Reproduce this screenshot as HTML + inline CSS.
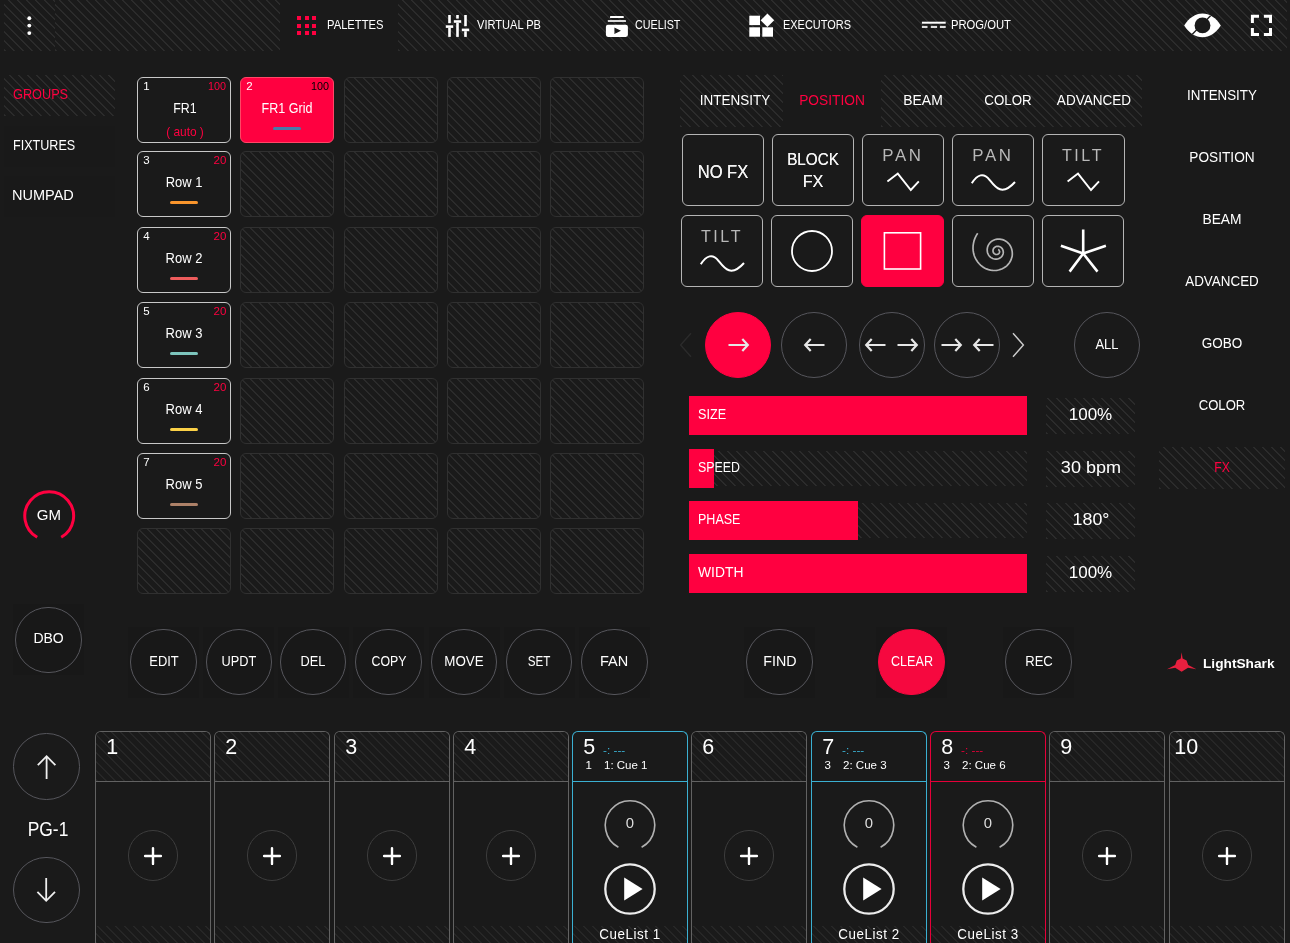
<!DOCTYPE html>
<html lang="en"><head><meta charset="utf-8"><title>LightShark</title>
<style>
html,body{margin:0;padding:0;background:#1a1a1a;}
body{width:1290px;height:943px;overflow:hidden;font-family:"Liberation Sans",sans-serif;}
#app{position:relative;width:1290px;height:943px;overflow:hidden;background:transparent;will-change:transform;}
#app div,#app span.t,#app svg{position:absolute;box-sizing:border-box;}
.t{white-space:nowrap;display:block;}
.h{background-color:#1a1a1a;background-image:repeating-linear-gradient(45deg,rgba(47,47,47,0) 0,#2f2f2f 0.8px,#2f2f2f 1.2px,rgba(47,47,47,0) 2.0px,rgba(47,47,47,0) 6.364px);}
.h2{background-color:#1a1a1a;background-image:repeating-linear-gradient(45deg,rgba(41,41,41,0) 0,#292929 0.8px,#292929 1.2px,rgba(41,41,41,0) 2.0px,rgba(41,41,41,0) 6.364px);}
.cell{border:1px solid #c8c8c8;border-radius:6px;}
.cell.e{border-color:#303030;}
.cell.sel{background:#ff0040;border-color:#ff4766;}
.bar{border-radius:2px;}
.fx{border:1px solid #b4b4b4;border-radius:6px;}
.fx.sel{background:#ff0040;border-color:#ff0040;}
.circ{border:1px solid #56565c;border-radius:50%;}
.circ.sel{background:#ff0040;border-color:#ff0040;}
.ex{border:1px solid #626262;border-bottom:none;border-radius:6px 6px 0 0;}
.exh{border-bottom:1px solid #626262;}
.plus{border:1px solid #3d3d3d;border-radius:50%;}

</style></head><body>
<div id="app">
<header id="topbar">
<div class="h" style="left:4px;top:0px;width:51px;height:51px;"></div>
<div class="h" style="left:55px;top:0px;width:225px;height:51px;"></div>
<div class="h" style="left:398px;top:0px;width:889px;height:51px;"></div>
<svg style="left:24px;top:14px" width="12" height="24" viewBox="0 0 12 24"><g fill="#fff"><circle cx="5.3" cy="4.2" r="1.95"/><circle cx="5.3" cy="11.6" r="1.95"/><circle cx="5.3" cy="19.1" r="1.95"/></g></svg>
<div style="left:296.8px;top:15.8px;width:4.2px;height:4.2px;background:#ff0040;"></div>
<div style="left:304.5px;top:15.8px;width:4.2px;height:4.2px;background:#ff0040;"></div>
<div style="left:312.2px;top:15.8px;width:4.2px;height:4.2px;background:#ff0040;"></div>
<div style="left:296.8px;top:23.5px;width:4.2px;height:4.2px;background:#ff0040;"></div>
<div style="left:304.5px;top:23.5px;width:4.2px;height:4.2px;background:#ff0040;"></div>
<div style="left:312.2px;top:23.5px;width:4.2px;height:4.2px;background:#ff0040;"></div>
<div style="left:296.8px;top:31.2px;width:4.2px;height:4.2px;background:#ff0040;"></div>
<div style="left:304.5px;top:31.2px;width:4.2px;height:4.2px;background:#ff0040;"></div>
<div style="left:312.2px;top:31.2px;width:4.2px;height:4.2px;background:#ff0040;"></div>
<span class="t" style="left:326.66px;transform-origin:0 50%;top:17px;font-size:13px;line-height:15px;color:#fff;font-weight:normal;transform:scaleX(0.8626);">PALETTES</span>
<svg style="left:445px;top:14px" width="26" height="24" viewBox="0 0 26 24"><g fill="#fff">
<rect x="3.2" y="1" width="2.6" height="8.2"/><rect x="0.8" y="11.3" width="7.4" height="2.6"/><rect x="3.2" y="13.9" width="2.6" height="9"/>
<rect x="11.2" y="1" width="2.6" height="3.6"/><rect x="8.8" y="6.2" width="7.4" height="2.6"/><rect x="11.2" y="8.8" width="2.6" height="14.1"/>
<rect x="19.2" y="1" width="2.6" height="11.2"/><rect x="16.8" y="14.6" width="7.4" height="2.6"/><rect x="19.2" y="17.2" width="2.6" height="5.7"/>
</g></svg>
<span class="t" style="left:476.87px;transform-origin:0 50%;top:17px;font-size:13px;line-height:15px;color:#fff;font-weight:normal;transform:scaleX(0.8518);">VIRTUAL PB</span>
<svg style="left:604px;top:14px" width="26" height="24" viewBox="0 0 26 24"><g fill="#fff">
<rect x="6" y="2.1" width="13.8" height="1.9" rx="0.6"/><rect x="3.8" y="6" width="18.2" height="2.1" rx="0.6" fill="#d8d8d8"/>
<path d="M4 10.7h17.8a2.1 2.1 0 0 1 2.1 2.1v8a2.1 2.1 0 0 1-2.1 2.1h-17.8a2.1 2.1 0 0 1-2.1-2.1v-8a2.1 2.1 0 0 1 2.1-2.1zM10.4 13.5v6.4l6.6-3.2z" fill-rule="evenodd"/>
</g></svg>
<span class="t" style="left:634.59px;transform-origin:0 50%;top:17px;font-size:13px;line-height:15px;color:#fff;font-weight:normal;transform:scaleX(0.8268);">CUELIST</span>
<svg style="left:748px;top:13px" width="28" height="26" viewBox="0 0 28 26"><g fill="#fff">
<rect x="1.3" y="2.7" width="10.7" height="9.4"/><rect x="1.3" y="14.3" width="10.7" height="9.4"/><rect x="14.3" y="14.3" width="10.7" height="9.4"/>
<rect x="14.6" y="2.5" width="9.6" height="9.6" transform="rotate(45 19.4 7.3)"/>
</g></svg>
<span class="t" style="left:783.48px;transform-origin:0 50%;top:17px;font-size:13px;line-height:15px;color:#fff;font-weight:normal;transform:scaleX(0.8432);">EXECUTORS</span>
<svg style="left:921px;top:20px" width="26" height="10" viewBox="0 0 26 10"><g fill="#fff">
<rect x="0.9" y="1.7" width="23.8" height="2"/><g fill="#ddd"><rect x="0.9" y="5.9" width="5.6" height="2.1"/><rect x="9.8" y="5.9" width="6.3" height="2.1"/><rect x="18.9" y="5.9" width="5.8" height="2.1"/></g>
</g></svg>
<span class="t" style="left:950.86px;transform-origin:0 50%;top:17px;font-size:13px;line-height:15px;color:#fff;font-weight:normal;transform:scaleX(0.8647);">PROG/OUT</span>
<svg style="left:1183px;top:13px" width="40" height="25" viewBox="0 0 40 25">
<path d="M1.2 12.4C6 5 12.5 0.6 19.5 0.6S33 5 37.8 12.4C33 19.8 26.5 24.2 19.5 24.2S6 19.8 1.2 12.4z" fill="#fff"/>
<circle cx="19.5" cy="12.4" r="7.9" fill="#1a1a1a"/>
<path d="M9.3 21.2L27.6 2.8" stroke="#1a1a1a" stroke-width="1.3" fill="none"/>
</svg>
<svg style="left:1250px;top:14px" width="24" height="23" viewBox="0 0 24 23"><g fill="none" stroke="#fff" stroke-width="3">
<path d="M2.4 8.9V2.3h6.6M13.9 2.3h6.6v6.6M20.5 14v6.4h-6.6M9 20.4H2.4v-6.4"/></g></svg>
</header>
<aside id="left">
<div class="h" style="left:4px;top:75px;width:111px;height:41px;"></div>
<div style="left:4px;top:126px;width:111px;height:41px;background:#191919;"></div>
<div style="left:4px;top:176px;width:111px;height:41px;background:#191919;"></div>
<span class="t" style="left:12.55px;transform-origin:0 50%;top:85px;font-size:15px;line-height:17px;color:#ff0040;font-weight:normal;transform:scaleX(0.8476);">GROUPS</span>
<span class="t" style="left:12.56px;transform-origin:0 50%;top:136px;font-size:15px;line-height:17px;color:#fff;font-weight:normal;transform:scaleX(0.8378);">FIXTURES</span>
<span class="t" style="left:12.41px;transform-origin:0 50%;top:186px;font-size:15px;line-height:17px;color:#fff;font-weight:normal;transform:scaleX(0.9676);">NUMPAD</span>
<svg style="left:20px;top:487px" width="58" height="58" viewBox="0 0 58 58">
<path d="M17.2 50.3A24.4 24.4 0 1 1 41.2 50.3" fill="none" stroke="#ff0040" stroke-width="3"/></svg>
<span class="t" style="left:49.2px;transform-origin:0 50%;top:506px;font-size:15px;line-height:17px;color:#fff;font-weight:normal;transform:scaleX(1.0034) translateX(-50%);">GM</span>
<div style="left:12.5px;top:603.5px;width:71px;height:71.5px;background:#181818;"></div>
<div class="circ" style="left:15px;top:606.5px;width:66.6px;height:66.6px;"></div>
<span class="t" style="left:48.6px;transform-origin:0 50%;top:630px;font-size:14px;line-height:16px;color:#fff;font-weight:normal;transform:scaleX(1.0000) translateX(-50%);">DBO</span>
</aside>
<main id="main">
<section id="groups">
<div class="cell" style="left:137px;top:77px;width:94px;height:66px;"></div>
<span class="t" style="left:143.14px;transform-origin:0 50%;top:80px;font-size:11.5px;line-height:12px;color:#fff;font-weight:normal;transform:scaleX(1.0000);">1</span>
<span class="t" style="left:226.35px;transform-origin:0 50%;top:80px;font-size:11.5px;line-height:12px;color:#ff0040;font-weight:normal;transform:scaleX(0.9393) translateX(-100%);">100</span>
<span class="t" style="left:184.89999999999998px;transform-origin:0 50%;top:100px;font-size:14px;line-height:16px;color:#fff;font-weight:normal;transform:scaleX(0.8846) translateX(-50%);">FR1</span>
<span class="t" style="left:185.2px;transform-origin:0 50%;top:124px;font-size:13px;line-height:15px;color:#ff0040;font-weight:normal;transform:scaleX(0.9146) translateX(-50%);">( auto )</span>
<div class="cell sel" style="left:240px;top:77px;width:94px;height:66px;"></div>
<span class="t" style="left:246.14px;transform-origin:0 50%;top:80px;font-size:11.5px;line-height:12px;color:#fff;font-weight:normal;transform:scaleX(1.0000);">2</span>
<span class="t" style="left:329.35px;transform-origin:0 50%;top:80px;font-size:11.5px;line-height:12px;color:#000;font-weight:normal;transform:scaleX(0.9393) translateX(-100%);">100</span>
<span class="t" style="left:287.2px;transform-origin:0 50%;top:100px;font-size:14px;line-height:16px;color:#fff;font-weight:normal;transform:scaleX(0.8953) translateX(-50%);">FR1 Grid</span>
<div class="bar" style="left:273px;top:126.9px;width:28.2px;height:3.3px;background:#4a7aa8;"></div>
<div class="cell e h" style="left:344px;top:77px;width:94px;height:66px;"></div>
<div class="cell e h" style="left:447px;top:77px;width:94px;height:66px;"></div>
<div class="cell e h" style="left:550px;top:77px;width:94px;height:66px;"></div>
<div class="cell" style="left:137px;top:151px;width:94px;height:66px;"></div>
<span class="t" style="left:143.14px;transform-origin:0 50%;top:154px;font-size:11.5px;line-height:12px;color:#fff;font-weight:normal;transform:scaleX(1.0000);">3</span>
<span class="t" style="left:226.39px;transform-origin:0 50%;top:154px;font-size:11.5px;line-height:12px;color:#ff0040;font-weight:normal;transform:scaleX(1.0000) translateX(-100%);">20</span>
<span class="t" style="left:184.2px;transform-origin:0 50%;top:174px;font-size:14px;line-height:16px;color:#fff;font-weight:normal;transform:scaleX(0.9238) translateX(-50%);">Row 1</span>
<div class="bar" style="left:170px;top:200.9px;width:28.2px;height:3.3px;background:#f9952c;"></div>
<div class="cell e h" style="left:240px;top:151px;width:94px;height:66px;"></div>
<div class="cell e h" style="left:344px;top:151px;width:94px;height:66px;"></div>
<div class="cell e h" style="left:447px;top:151px;width:94px;height:66px;"></div>
<div class="cell e h" style="left:550px;top:151px;width:94px;height:66px;"></div>
<div class="cell" style="left:137px;top:227px;width:94px;height:66px;"></div>
<span class="t" style="left:143.14px;transform-origin:0 50%;top:230px;font-size:11.5px;line-height:12px;color:#fff;font-weight:normal;transform:scaleX(1.0000);">4</span>
<span class="t" style="left:226.39px;transform-origin:0 50%;top:230px;font-size:11.5px;line-height:12px;color:#ff0040;font-weight:normal;transform:scaleX(1.0000) translateX(-100%);">20</span>
<span class="t" style="left:184.2px;transform-origin:0 50%;top:250px;font-size:14px;line-height:16px;color:#fff;font-weight:normal;transform:scaleX(0.9264) translateX(-50%);">Row 2</span>
<div class="bar" style="left:170px;top:276.9px;width:28.2px;height:3.3px;background:#ee5c5c;"></div>
<div class="cell e h" style="left:240px;top:227px;width:94px;height:66px;"></div>
<div class="cell e h" style="left:344px;top:227px;width:94px;height:66px;"></div>
<div class="cell e h" style="left:447px;top:227px;width:94px;height:66px;"></div>
<div class="cell e h" style="left:550px;top:227px;width:94px;height:66px;"></div>
<div class="cell" style="left:137px;top:302px;width:94px;height:66px;"></div>
<span class="t" style="left:143.14px;transform-origin:0 50%;top:305px;font-size:11.5px;line-height:12px;color:#fff;font-weight:normal;transform:scaleX(1.0000);">5</span>
<span class="t" style="left:226.39px;transform-origin:0 50%;top:305px;font-size:11.5px;line-height:12px;color:#ff0040;font-weight:normal;transform:scaleX(1.0000) translateX(-100%);">20</span>
<span class="t" style="left:184.2px;transform-origin:0 50%;top:325px;font-size:14px;line-height:16px;color:#fff;font-weight:normal;transform:scaleX(0.9264) translateX(-50%);">Row 3</span>
<div class="bar" style="left:170px;top:351.9px;width:28.2px;height:3.3px;background:#7dc5bd;"></div>
<div class="cell e h" style="left:240px;top:302px;width:94px;height:66px;"></div>
<div class="cell e h" style="left:344px;top:302px;width:94px;height:66px;"></div>
<div class="cell e h" style="left:447px;top:302px;width:94px;height:66px;"></div>
<div class="cell e h" style="left:550px;top:302px;width:94px;height:66px;"></div>
<div class="cell" style="left:137px;top:378px;width:94px;height:66px;"></div>
<span class="t" style="left:143.14px;transform-origin:0 50%;top:381px;font-size:11.5px;line-height:12px;color:#fff;font-weight:normal;transform:scaleX(1.0000);">6</span>
<span class="t" style="left:226.39px;transform-origin:0 50%;top:381px;font-size:11.5px;line-height:12px;color:#ff0040;font-weight:normal;transform:scaleX(1.0000) translateX(-100%);">20</span>
<span class="t" style="left:184.2px;transform-origin:0 50%;top:401px;font-size:14px;line-height:16px;color:#fff;font-weight:normal;transform:scaleX(0.9276) translateX(-50%);">Row 4</span>
<div class="bar" style="left:170px;top:427.9px;width:28.2px;height:3.3px;background:#fbd147;"></div>
<div class="cell e h" style="left:240px;top:378px;width:94px;height:66px;"></div>
<div class="cell e h" style="left:344px;top:378px;width:94px;height:66px;"></div>
<div class="cell e h" style="left:447px;top:378px;width:94px;height:66px;"></div>
<div class="cell e h" style="left:550px;top:378px;width:94px;height:66px;"></div>
<div class="cell" style="left:137px;top:453px;width:94px;height:66px;"></div>
<span class="t" style="left:143.14px;transform-origin:0 50%;top:456px;font-size:11.5px;line-height:12px;color:#fff;font-weight:normal;transform:scaleX(1.0000);">7</span>
<span class="t" style="left:226.39px;transform-origin:0 50%;top:456px;font-size:11.5px;line-height:12px;color:#ff0040;font-weight:normal;transform:scaleX(1.0000) translateX(-100%);">20</span>
<span class="t" style="left:184.2px;transform-origin:0 50%;top:476px;font-size:14px;line-height:16px;color:#fff;font-weight:normal;transform:scaleX(0.9264) translateX(-50%);">Row 5</span>
<div class="bar" style="left:170px;top:502.9px;width:28.2px;height:3.3px;background:#ad8168;"></div>
<div class="cell e h" style="left:240px;top:453px;width:94px;height:66px;"></div>
<div class="cell e h" style="left:344px;top:453px;width:94px;height:66px;"></div>
<div class="cell e h" style="left:447px;top:453px;width:94px;height:66px;"></div>
<div class="cell e h" style="left:550px;top:453px;width:94px;height:66px;"></div>
<div class="cell e h" style="left:137px;top:528px;width:94px;height:66px;"></div>
<div class="cell e h" style="left:240px;top:528px;width:94px;height:66px;"></div>
<div class="cell e h" style="left:344px;top:528px;width:94px;height:66px;"></div>
<div class="cell e h" style="left:447px;top:528px;width:94px;height:66px;"></div>
<div class="cell e h" style="left:550px;top:528px;width:94px;height:66px;"></div>
</section>
<section id="actions">
<div style="left:128px;top:626.6px;width:71px;height:71px;background:#181818;"></div>
<div class="circ" style="left:130.2px;top:628.8px;width:66.6px;height:66.6px;"></div>
<span class="t" style="left:163.5px;transform-origin:0 50%;top:653px;font-size:14px;line-height:16px;color:#fff;font-weight:normal;transform:scaleX(0.9219) translateX(-50%);">EDIT</span>
<div style="left:203.3px;top:626.6px;width:71px;height:71px;background:#181818;"></div>
<div class="circ" style="left:205.5px;top:628.8px;width:66.6px;height:66.6px;"></div>
<span class="t" style="left:238.8px;transform-origin:0 50%;top:653px;font-size:14px;line-height:16px;color:#fff;font-weight:normal;transform:scaleX(0.9122) translateX(-50%);">UPDT</span>
<div style="left:277.5px;top:626.6px;width:71px;height:71px;background:#181818;"></div>
<div class="circ" style="left:279.7px;top:628.8px;width:66.6px;height:66.6px;"></div>
<span class="t" style="left:313px;transform-origin:0 50%;top:653px;font-size:14px;line-height:16px;color:#fff;font-weight:normal;transform:scaleX(0.9134) translateX(-50%);">DEL</span>
<div style="left:353.2px;top:626.6px;width:71px;height:71px;background:#181818;"></div>
<div class="circ" style="left:355.4px;top:628.8px;width:66.6px;height:66.6px;"></div>
<span class="t" style="left:388.7px;transform-origin:0 50%;top:653px;font-size:14px;line-height:16px;color:#fff;font-weight:normal;transform:scaleX(0.8825) translateX(-50%);">COPY</span>
<div style="left:428.7px;top:626.6px;width:71px;height:71px;background:#181818;"></div>
<div class="circ" style="left:430.9px;top:628.8px;width:66.6px;height:66.6px;"></div>
<span class="t" style="left:464.2px;transform-origin:0 50%;top:653px;font-size:14px;line-height:16px;color:#fff;font-weight:normal;transform:scaleX(0.9530) translateX(-50%);">MOVE</span>
<div style="left:503.5px;top:626.6px;width:71px;height:71px;background:#181818;"></div>
<div class="circ" style="left:505.7px;top:628.8px;width:66.6px;height:66.6px;"></div>
<span class="t" style="left:539px;transform-origin:0 50%;top:653px;font-size:14px;line-height:16px;color:#fff;font-weight:normal;transform:scaleX(0.8321) translateX(-50%);">SET</span>
<div style="left:578.9px;top:626.6px;width:71px;height:71px;background:#181818;"></div>
<div class="circ" style="left:581.1px;top:628.8px;width:66.6px;height:66.6px;"></div>
<span class="t" style="left:614.4px;transform-origin:0 50%;top:653px;font-size:14px;line-height:16px;color:#fff;font-weight:normal;transform:scaleX(1.0359) translateX(-50%);">FAN</span>
<div style="left:743.9px;top:626.6px;width:71px;height:71px;background:#181818;"></div>
<div class="circ" style="left:746.1px;top:628.8px;width:66.6px;height:66.6px;"></div>
<span class="t" style="left:780.1px;transform-origin:0 50%;top:653px;font-size:14px;line-height:16px;color:#fff;font-weight:normal;transform:scaleX(1.0192) translateX(-50%);">FIND</span>
<div style="left:876px;top:626.6px;width:71px;height:71px;background:#181818;"></div>
<div class="circ sel" style="left:878.2px;top:628.8px;width:66.6px;height:66.6px;background:#f6083f;border-color:#f6083f;"></div>
<span class="t" style="left:912.2px;transform-origin:0 50%;top:653px;font-size:14px;line-height:16px;color:#fff;font-weight:normal;transform:scaleX(0.8994) translateX(-50%);">CLEAR</span>
<div style="left:1002.9px;top:626.6px;width:71px;height:71px;background:#181818;"></div>
<div class="circ" style="left:1005.1px;top:628.8px;width:66.6px;height:66.6px;"></div>
<span class="t" style="left:1039.1000000000001px;transform-origin:0 50%;top:653px;font-size:14px;line-height:16px;color:#fff;font-weight:normal;transform:scaleX(0.9328) translateX(-50%);">REC</span>
</section>
<section id="fx">
<div class="h" style="left:680px;top:75px;width:103px;height:52px;"></div>
<div class="h" style="left:881px;top:75px;width:261px;height:52px;"></div>
<span class="t" style="left:734.5px;transform-origin:0 50%;top:91px;font-size:15px;line-height:17px;color:#fff;font-weight:normal;transform:scaleX(0.8986) translateX(-50%);">INTENSITY</span>
<span class="t" style="left:832px;transform-origin:0 50%;top:91px;font-size:15px;line-height:17px;color:#ff0040;font-weight:normal;transform:scaleX(0.9162) translateX(-50%);">POSITION</span>
<span class="t" style="left:923px;transform-origin:0 50%;top:91px;font-size:15px;line-height:17px;color:#fff;font-weight:normal;transform:scaleX(0.9290) translateX(-50%);">BEAM</span>
<span class="t" style="left:1008.4px;transform-origin:0 50%;top:91px;font-size:15px;line-height:17px;color:#fff;font-weight:normal;transform:scaleX(0.8868) translateX(-50%);">COLOR</span>
<span class="t" style="left:1094px;transform-origin:0 50%;top:91px;font-size:15px;line-height:17px;color:#fff;font-weight:normal;transform:scaleX(0.9036) translateX(-50%);">ADVANCED</span>
<div class="fx" style="left:681.8px;top:134px;width:82.3px;height:71.8px;"></div>
<div class="fx" style="left:771.8px;top:134px;width:82.3px;height:71.8px;"></div>
<div class="fx" style="left:862px;top:134px;width:82.3px;height:71.8px;"></div>
<div class="fx" style="left:952px;top:134px;width:82.3px;height:71.8px;"></div>
<div class="fx" style="left:1042.3px;top:134px;width:82.3px;height:71.8px;"></div>
<div class="fx" style="left:681.2px;top:215px;width:82.3px;height:71.6px;"></div>
<div class="fx" style="left:771.2px;top:215px;width:82.3px;height:71.6px;"></div>
<div class="fx sel" style="left:861.3px;top:215px;width:82.3px;height:71.6px;"></div>
<div class="fx" style="left:951.6px;top:215px;width:82.3px;height:71.6px;"></div>
<div class="fx" style="left:1042px;top:215px;width:82.3px;height:71.6px;"></div>
<span class="t" style="left:723.4px;transform-origin:0 50%;top:162px;font-size:17.5px;line-height:20px;color:#f4f4f4;font-weight:normal;transform:scaleX(0.9434) translateX(-50%);text-shadow:0 0 0.4px #fff;">NO FX</span>
<span class="t" style="left:813px;transform-origin:0 50%;top:150px;font-size:17px;line-height:19px;color:#f4f4f4;font-weight:normal;transform:scaleX(0.8966) translateX(-50%);text-shadow:0 0 0.4px #fff;">BLOCK</span>
<span class="t" style="left:813px;transform-origin:0 50%;top:172px;font-size:17px;line-height:19px;color:#f4f4f4;font-weight:normal;transform:scaleX(0.9544) translateX(-50%);text-shadow:0 0 0.4px #fff;">FX</span>
<span class="t" style="left:902.5px;transform-origin:0 50%;top:146px;font-size:16.5px;line-height:18px;color:#b8b8b8;font-weight:normal;letter-spacing:2.6px;transform:scaleX(1.0205) translateX(-50%);">PAN</span>
<span class="t" style="left:992.5px;transform-origin:0 50%;top:146px;font-size:16.5px;line-height:18px;color:#b8b8b8;font-weight:normal;letter-spacing:2.6px;transform:scaleX(1.0205) translateX(-50%);">PAN</span>
<span class="t" style="left:1083px;transform-origin:0 50%;top:146px;font-size:16.5px;line-height:18px;color:#b8b8b8;font-weight:normal;letter-spacing:2.6px;transform:scaleX(0.9752) translateX(-50%);">TILT</span>
<span class="t" style="left:721.5px;transform-origin:0 50%;top:227px;font-size:16.5px;line-height:18px;color:#b8b8b8;font-weight:normal;letter-spacing:2.6px;transform:scaleX(0.9752) translateX(-50%);">TILT</span>
<svg style="left:882px;top:168px" width="44" height="28" viewBox="0 0 44 28"><path d="M5.4 13.6L15.8 5.6L28.8 22L36.8 13.4" stroke="#fff" fill="none" stroke-width="1.9"/></svg>
<svg style="left:1062px;top:168px" width="44" height="28" viewBox="0 0 44 28"><path d="M5.6 13.6L16 5.6L29 22L37 13.4" stroke="#fff" fill="none" stroke-width="1.9"/></svg>
<svg style="left:968px;top:166px" width="52" height="32" viewBox="0 0 52 32"><path d="M3.8 17.2C9.5 8.5 15.5 6.2 21.5 13.8S34 30.5 47 16" stroke="#fff" fill="none" stroke-width="2"/></svg>
<svg style="left:697px;top:247px" width="52" height="32" viewBox="0 0 52 32"><path d="M3.8 17.2C9.5 8.5 15.5 6.2 21.5 13.8S34 30.5 47 16" stroke="#fff" fill="none" stroke-width="2"/></svg>
<svg style="left:787px;top:226px" width="50" height="50" viewBox="0 0 50 50"><circle cx="25" cy="25" r="20" stroke="#fff" fill="none" stroke-width="1.8"/></svg>
<svg style="left:877px;top:226px" width="50" height="50" viewBox="0 0 50 50"><rect x="7.4" y="6.8" width="36.2" height="36.2" stroke="#fff" fill="none" stroke-width="1.6"/></svg>
<svg style="left:965px;top:226px" width="56" height="52" viewBox="0 0 56 52"><path d="M12.7 7.3L11.2 9.6L10.0 12.1L9.1 14.6L8.5 17.2L8.1 19.8L8.0 22.4L8.2 24.9L8.6 27.3L9.3 29.7L10.2 32.0L11.4 34.1L12.7 36.0L14.2 37.8L15.8 39.4L17.6 40.7L19.5 41.9L21.4 42.9L23.5 43.6L25.5 44.1L27.6 44.4L29.6 44.5L31.7 44.3L33.6 44.0L35.5 43.4L37.3 42.7L39.0 41.8L40.6 40.8L42.0 39.6L43.3 38.2L44.4 36.8L45.3 35.3L46.1 33.7L46.6 32.1L47.1 30.5L47.3 28.8L47.3 27.2L47.2 25.6L46.9 24.0L46.5 22.5L45.9 21.0L45.2 19.7L44.4 18.4L43.4 17.3L42.4 16.3L41.2 15.4L40.0 14.7L38.8 14.1L37.5 13.6L36.1 13.3L34.8 13.1L33.5 13.0L32.2 13.1L31.0 13.3L29.7 13.7L28.6 14.2L27.5 14.7L26.5 15.4L25.6 16.2L24.8 17.0L24.1 17.9L23.5 18.9L23.0 19.9L22.6 20.9L22.4 22.0L22.2 23.0L22.2 24.1L22.3 25.1L22.4 26.1L22.7 27.1L23.1 28.0L23.5 28.9L24.1 29.7L24.7 30.4L25.4 31.1L26.1 31.6L26.9 32.1L27.7 32.5L28.5 32.8L29.3 33.0L30.2 33.1L31.0 33.2L31.9 33.1L32.7 33.0L33.4 32.7L34.2 32.4L34.9 32.1L35.5 31.6L36.1 31.1L36.6 30.6L37.1 30.0L37.4 29.4L37.8 28.8L38.0 28.1L38.2 27.4L38.3 26.7L38.3 26.1L38.2 25.4L38.1 24.8L37.9 24.1L37.7 23.6L37.4 23.0L37.1 22.5L36.7 22.0L36.2 21.6L35.8 21.3L35.3 20.9L34.8 20.7L34.2 20.5L33.7 20.4L33.2 20.3L32.6 20.3L32.1 20.3L31.6 20.4L31.1 20.5L30.6 20.7L30.2 21.0L29.8 21.2L29.4 21.6L29.1 21.9L28.8 22.3L28.5 22.7L28.3 23.1L28.2 23.5L28.1 23.9L28.0 24.4L28.0 24.8L28.0 25.2L28.1 25.6L28.2 26.0L28.3 26.4L28.5 26.8L28.8 27.1L29.0 27.4L29.3 27.7L29.6 27.9L29.9 28.1L30.2 28.2L30.6 28.4L30.9 28.5L31.3 28.5L31.6 28.5L31.9 28.5L32.3 28.4L32.6 28.3L32.9 28.2L33.2 28.1L33.4 27.9L33.7 27.7L33.9 27.5L34.1 27.2L34.2 27.0L34.4 26.7L34.5 26.4L34.5 26.2L34.6 25.9L34.6 25.6L34.6 25.3L34.5 25.1L34.4 24.8L34.3 24.6L34.2 24.4L34.1 24.2L33.9 24.0L33.7 23.8L33.5 23.6L33.3 23.5L33.1 23.4" stroke="#b4b4b4" stroke-width="1.7" fill="none"/></svg>
<svg style="left:1056px;top:226px" width="56" height="52" viewBox="0 0 56 52"><path d="M27.2 27.5L27.2 3.5M27.2 27.5L49.9 19.8M27.2 27.5L41.5 45.6M27.2 27.5L13.6 45.6M27.2 27.5L4.9 19.8" stroke="#fff" fill="none" stroke-width="2.6"/></svg>
<div class="circ sel" style="left:704.8px;top:311.5px;width:66.6px;height:66.6px;"></div>
<div class="circ" style="left:780.7px;top:311.5px;width:66.6px;height:66.6px;"></div>
<div class="circ" style="left:858.7px;top:311.5px;width:66.6px;height:66.6px;"></div>
<div class="circ" style="left:933.6px;top:311.5px;width:66.6px;height:66.6px;"></div>
<div class="circ" style="left:1073.7px;top:311.5px;width:66.6px;height:66.6px;"></div>
<span class="t" style="left:1107px;transform-origin:0 50%;top:336px;font-size:14px;line-height:16px;color:#fff;font-weight:normal;transform:scaleX(0.9239) translateX(-50%);">ALL</span>
<svg style="left:722.7px;top:335px" width="32" height="20" viewBox="722.7 335 32 20"><path d="M728.2 345H747.0M742.00 339.1L747.50 345L742.00 350.9" stroke="#e6e6e6" stroke-width="2.2" fill="none"/></svg>
<svg style="left:798.4px;top:335px" width="32" height="20" viewBox="798.4 335 32 20"><path d="M824.9 345H806.1M811.10 339.1L805.60 345L811.10 350.9" stroke="#e6e6e6" stroke-width="2.2" fill="none"/></svg>
<svg style="left:859.4px;top:335px" width="32" height="20" viewBox="859.4 335 32 20"><path d="M885.9 345H867.1M872.10 339.1L866.60 345L872.10 350.9" stroke="#e6e6e6" stroke-width="2.2" fill="none"/></svg>
<svg style="left:892.3px;top:335px" width="32" height="20" viewBox="892.3 335 32 20"><path d="M897.8 345H916.5999999999999M911.60 339.1L917.10 345L911.60 350.9" stroke="#e6e6e6" stroke-width="2.2" fill="none"/></svg>
<svg style="left:935.7px;top:335px" width="32" height="20" viewBox="935.7 335 32 20"><path d="M941.2 345H960.0M955.00 339.1L960.50 345L955.00 350.9" stroke="#e6e6e6" stroke-width="2.2" fill="none"/></svg>
<svg style="left:967.3px;top:335px" width="32" height="20" viewBox="967.3 335 32 20"><path d="M993.8 345H975.0M980.00 339.1L974.50 345L980.00 350.9" stroke="#e6e6e6" stroke-width="2.2" fill="none"/></svg>
<svg style="left:1008px;top:330px" width="20" height="30" viewBox="0 0 20 30"><path d="M5 3.2L15.4 15L5 26.8" stroke="#ccc" stroke-width="1.4" fill="none"/></svg>
<svg style="left:676px;top:330px" width="20" height="30" viewBox="0 0 20 30"><path d="M15 3.2L4.6 15L15 26.8" stroke="#2b2b2b" stroke-width="1.4" fill="none"/></svg>
<div class="h" style="left:689px;top:398px;width:338.2px;height:35px;"></div>
<div style="left:689px;top:396px;width:338.2px;height:39px;background:#ff0040;"></div>
<span class="t" style="left:697.65px;transform-origin:0 50%;top:406px;font-size:14px;line-height:16px;color:#fff;font-weight:normal;transform:scaleX(0.9032);">SIZE</span>
<div class="h" style="left:1046px;top:398px;width:89px;height:35.5px;"></div>
<span class="t" style="left:1090.5px;transform-origin:0 50%;top:405px;font-size:17px;line-height:19px;color:#fff;font-weight:normal;transform:scaleX(1.0000) translateX(-50%);">100%</span>
<div class="h" style="left:689px;top:451px;width:338.2px;height:35px;"></div>
<div style="left:689px;top:449px;width:25.3px;height:39px;background:#ff0040;"></div>
<span class="t" style="left:697.67px;transform-origin:0 50%;top:459px;font-size:14px;line-height:16px;color:#fff;font-weight:normal;transform:scaleX(0.8851);">SPEED</span>
<div class="h" style="left:1046px;top:451px;width:89px;height:35.5px;"></div>
<span class="t" style="left:1090.5px;transform-origin:0 50%;top:458px;font-size:17px;line-height:19px;color:#fff;font-weight:normal;transform:scaleX(1.0628) translateX(-50%);">30 bpm</span>
<div class="h" style="left:689px;top:503px;width:338.2px;height:35px;"></div>
<div style="left:689px;top:501px;width:169px;height:39px;background:#ff0040;"></div>
<span class="t" style="left:697.66px;transform-origin:0 50%;top:511px;font-size:14px;line-height:16px;color:#fff;font-weight:normal;transform:scaleX(0.8936);">PHASE</span>
<div class="h" style="left:1046px;top:503px;width:89px;height:35.5px;"></div>
<span class="t" style="left:1090.5px;transform-origin:0 50%;top:510px;font-size:17px;line-height:19px;color:#fff;font-weight:normal;transform:scaleX(1.0496) translateX(-50%);">180°</span>
<div class="h" style="left:689px;top:556px;width:338.2px;height:35px;"></div>
<div style="left:689px;top:554px;width:338.2px;height:39px;background:#ff0040;"></div>
<span class="t" style="left:697.56px;transform-origin:0 50%;top:564px;font-size:14px;line-height:16px;color:#fff;font-weight:normal;transform:scaleX(0.9891);">WIDTH</span>
<div class="h" style="left:1046px;top:556px;width:89px;height:35.5px;"></div>
<span class="t" style="left:1090.5px;transform-origin:0 50%;top:563px;font-size:17px;line-height:19px;color:#fff;font-weight:normal;transform:scaleX(1.0000) translateX(-50%);">100%</span>
</section>
</main>
<aside id="right">
<div class="h" style="left:1159px;top:447px;width:126px;height:42px;"></div>
<span class="t" style="left:1222px;transform-origin:0 50%;top:87px;font-size:14.5px;line-height:16px;color:#fff;font-weight:normal;transform:scaleX(0.9211) translateX(-50%);">INTENSITY</span>
<span class="t" style="left:1222px;transform-origin:0 50%;top:149px;font-size:14.5px;line-height:16px;color:#fff;font-weight:normal;transform:scaleX(0.9420) translateX(-50%);">POSITION</span>
<span class="t" style="left:1222px;transform-origin:0 50%;top:211px;font-size:14.5px;line-height:16px;color:#fff;font-weight:normal;transform:scaleX(0.9512) translateX(-50%);">BEAM</span>
<span class="t" style="left:1222px;transform-origin:0 50%;top:273px;font-size:14.5px;line-height:16px;color:#fff;font-weight:normal;transform:scaleX(0.9250) translateX(-50%);">ADVANCED</span>
<span class="t" style="left:1222px;transform-origin:0 50%;top:335px;font-size:14.5px;line-height:16px;color:#fff;font-weight:normal;transform:scaleX(0.9318) translateX(-50%);">GOBO</span>
<span class="t" style="left:1222px;transform-origin:0 50%;top:397px;font-size:14.5px;line-height:16px;color:#fff;font-weight:normal;transform:scaleX(0.9038) translateX(-50%);">COLOR</span>
<span class="t" style="left:1222px;transform-origin:0 50%;top:459px;font-size:14.5px;line-height:16px;color:#ff0040;font-weight:normal;transform:scaleX(0.8421) translateX(-50%);">FX</span>
<svg style="left:1166px;top:651px" width="32" height="22" viewBox="0 0 32 22">
<path d="M15.6 1.2L16.6 7.4L20.6 9.4L22.2 14L30.4 18.2L22 16.8L15.6 20.8L9.2 16.8L1 18.2L9.2 14L10.8 9.4L14.8 7.4z" fill="#e8203f"/></svg>
<span class="t" style="left:1202.67px;transform-origin:0 50%;top:656px;font-size:13.4px;line-height:15px;color:#fff;font-weight:bold;transform:scaleX(1.0229);">LightShark</span>
</aside>
<footer id="executors">
<div class="circ" style="left:13.2px;top:733.2px;width:66.4px;height:66.4px;"></div>
<div class="circ" style="left:13.2px;top:857px;width:66.4px;height:66.4px;"></div>
<svg style="left:33px;top:752px" width="28" height="30" viewBox="0 0 28 30"><path d="M13.6 27V4.6M4.8 13.2L13.6 4.2L22.4 13.2" stroke="#eee" stroke-width="1.8" fill="none"/></svg>
<svg style="left:33px;top:875px" width="28" height="30" viewBox="0 0 28 30"><path d="M13.2 3V25.4M4.4 16.8L13.2 25.8L22 16.8" stroke="#eee" stroke-width="1.8" fill="none"/></svg>
<span class="t" style="left:48px;transform-origin:0 50%;top:818px;font-size:20px;line-height:22px;color:#fff;font-weight:normal;transform:scaleX(0.8712) translateX(-50%);">PG-1</span>
<div class="ex" style="left:95px;top:731px;width:116px;height:215px;border-color:#626262;"></div>
<div class="exh h2" style="left:96px;top:732px;width:114px;height:50px;border-color:#626262;border-radius:5px 5px 0 0;"></div>
<div class="h2" style="left:96px;top:925.6px;width:114px;height:18px;"></div>
<span class="t" style="left:112.2px;transform-origin:0 50%;top:735px;font-size:21.5px;line-height:24px;color:#fff;font-weight:normal;transform:scaleX(1.0000) translateX(-50%);">1</span>
<div class="plus" style="left:127.6px;top:830.2px;width:50.4px;height:50.4px;"></div>
<svg style="left:140.8px;top:843.5px" width="24" height="24" viewBox="0 0 24 24"><path d="M4.1 12H19.9M12 4.1V19.9" stroke="#fff" stroke-width="2.4" stroke-linecap="round" fill="none"/></svg>
<div class="ex" style="left:214px;top:731px;width:116px;height:215px;border-color:#626262;"></div>
<div class="exh h2" style="left:215px;top:732px;width:114px;height:50px;border-color:#626262;border-radius:5px 5px 0 0;"></div>
<div class="h2" style="left:215px;top:925.6px;width:114px;height:18px;"></div>
<span class="t" style="left:231.2px;transform-origin:0 50%;top:735px;font-size:21.5px;line-height:24px;color:#fff;font-weight:normal;transform:scaleX(1.0000) translateX(-50%);">2</span>
<div class="plus" style="left:246.6px;top:830.2px;width:50.4px;height:50.4px;"></div>
<svg style="left:259.8px;top:843.5px" width="24" height="24" viewBox="0 0 24 24"><path d="M4.1 12H19.9M12 4.1V19.9" stroke="#fff" stroke-width="2.4" stroke-linecap="round" fill="none"/></svg>
<div class="ex" style="left:334px;top:731px;width:116px;height:215px;border-color:#626262;"></div>
<div class="exh h2" style="left:335px;top:732px;width:114px;height:50px;border-color:#626262;border-radius:5px 5px 0 0;"></div>
<div class="h2" style="left:335px;top:925.6px;width:114px;height:18px;"></div>
<span class="t" style="left:351.2px;transform-origin:0 50%;top:735px;font-size:21.5px;line-height:24px;color:#fff;font-weight:normal;transform:scaleX(1.0000) translateX(-50%);">3</span>
<div class="plus" style="left:366.6px;top:830.2px;width:50.4px;height:50.4px;"></div>
<svg style="left:379.8px;top:843.5px" width="24" height="24" viewBox="0 0 24 24"><path d="M4.1 12H19.9M12 4.1V19.9" stroke="#fff" stroke-width="2.4" stroke-linecap="round" fill="none"/></svg>
<div class="ex" style="left:453px;top:731px;width:116px;height:215px;border-color:#626262;"></div>
<div class="exh h2" style="left:454px;top:732px;width:114px;height:50px;border-color:#626262;border-radius:5px 5px 0 0;"></div>
<div class="h2" style="left:454px;top:925.6px;width:114px;height:18px;"></div>
<span class="t" style="left:470.2px;transform-origin:0 50%;top:735px;font-size:21.5px;line-height:24px;color:#fff;font-weight:normal;transform:scaleX(1.0000) translateX(-50%);">4</span>
<div class="plus" style="left:485.6px;top:830.2px;width:50.4px;height:50.4px;"></div>
<svg style="left:498.8px;top:843.5px" width="24" height="24" viewBox="0 0 24 24"><path d="M4.1 12H19.9M12 4.1V19.9" stroke="#fff" stroke-width="2.4" stroke-linecap="round" fill="none"/></svg>
<div class="ex" style="left:572px;top:731px;width:116px;height:215px;border-color:#3bb0d2;"></div>
<div class="exh" style="left:573px;top:732px;width:114px;height:50px;border-color:#3bb0d2;border-radius:5px 5px 0 0;"></div>
<div class="h2" style="left:573px;top:925.6px;width:114px;height:18px;"></div>
<span class="t" style="left:589.2px;transform-origin:0 50%;top:735px;font-size:21.5px;line-height:24px;color:#fff;font-weight:normal;transform:scaleX(1.0000) translateX(-50%);">5</span>
<span class="t" style="left:602.52px;transform-origin:0 50%;top:744px;font-size:11px;line-height:12px;color:#3bb0d2;font-weight:normal;transform:scaleX(1.0714);">-: ---</span>
<span class="t" style="left:585.54px;transform-origin:0 50%;top:759px;font-size:11.5px;line-height:12px;color:#fff;font-weight:normal;transform:scaleX(1.0000);">1</span>
<span class="t" style="left:603.94px;transform-origin:0 50%;top:759px;font-size:11.5px;line-height:12px;color:#fff;font-weight:normal;transform:scaleX(1.0005);">1: Cue 1</span>
<svg style="left:600.8px;top:795.6px" width="58" height="58" viewBox="0 0 58 58"><path d="M17.4 51.2A24.7 24.7 0 1 1 40.6 51.2" fill="none" stroke="#b0b0b0" stroke-width="1.6"/></svg>
<span class="t" style="left:629.8px;transform-origin:0 50%;top:815px;font-size:14px;line-height:16px;color:#ddd;font-weight:normal;transform:scaleX(1.0625) translateX(-50%);">0</span>
<svg style="left:600.8px;top:859.7px" width="58" height="58" viewBox="0 0 58 58"><circle cx="29" cy="29" r="24.7" fill="none" stroke="#ececec" stroke-width="2.3"/><path d="M23.2 17.4L41.6 29L23.2 40.6z" fill="#fff"/></svg>
<span class="t" style="left:629.8px;transform-origin:0 50%;top:925px;font-size:15px;line-height:17px;color:#fff;font-weight:normal;letter-spacing:0.6px;transform:scaleX(0.8913) translateX(-50%);">CueList 1</span>
<div class="ex" style="left:691px;top:731px;width:116px;height:215px;border-color:#626262;"></div>
<div class="exh h2" style="left:692px;top:732px;width:114px;height:50px;border-color:#626262;border-radius:5px 5px 0 0;"></div>
<div class="h2" style="left:692px;top:925.6px;width:114px;height:18px;"></div>
<span class="t" style="left:708.2px;transform-origin:0 50%;top:735px;font-size:21.5px;line-height:24px;color:#fff;font-weight:normal;transform:scaleX(1.0000) translateX(-50%);">6</span>
<div class="plus" style="left:723.6px;top:830.2px;width:50.4px;height:50.4px;"></div>
<svg style="left:736.8px;top:843.5px" width="24" height="24" viewBox="0 0 24 24"><path d="M4.1 12H19.9M12 4.1V19.9" stroke="#fff" stroke-width="2.4" stroke-linecap="round" fill="none"/></svg>
<div class="ex" style="left:811px;top:731px;width:116px;height:215px;border-color:#3bb0d2;"></div>
<div class="exh" style="left:812px;top:732px;width:114px;height:50px;border-color:#3bb0d2;border-radius:5px 5px 0 0;"></div>
<div class="h2" style="left:812px;top:925.6px;width:114px;height:18px;"></div>
<span class="t" style="left:828.2px;transform-origin:0 50%;top:735px;font-size:21.5px;line-height:24px;color:#fff;font-weight:normal;transform:scaleX(1.0000) translateX(-50%);">7</span>
<span class="t" style="left:841.52px;transform-origin:0 50%;top:744px;font-size:11px;line-height:12px;color:#3bb0d2;font-weight:normal;transform:scaleX(1.0714);">-: ---</span>
<span class="t" style="left:824.54px;transform-origin:0 50%;top:759px;font-size:11.5px;line-height:12px;color:#fff;font-weight:normal;transform:scaleX(1.0000);">3</span>
<span class="t" style="left:842.93px;transform-origin:0 50%;top:759px;font-size:11.5px;line-height:12px;color:#fff;font-weight:normal;transform:scaleX(1.0038);">2: Cue 3</span>
<svg style="left:839.8px;top:795.6px" width="58" height="58" viewBox="0 0 58 58"><path d="M17.4 51.2A24.7 24.7 0 1 1 40.6 51.2" fill="none" stroke="#b0b0b0" stroke-width="1.6"/></svg>
<span class="t" style="left:868.8px;transform-origin:0 50%;top:815px;font-size:14px;line-height:16px;color:#ddd;font-weight:normal;transform:scaleX(1.0625) translateX(-50%);">0</span>
<svg style="left:839.8px;top:859.7px" width="58" height="58" viewBox="0 0 58 58"><circle cx="29" cy="29" r="24.7" fill="none" stroke="#ececec" stroke-width="2.3"/><path d="M23.2 17.4L41.6 29L23.2 40.6z" fill="#fff"/></svg>
<span class="t" style="left:868.8px;transform-origin:0 50%;top:925px;font-size:15px;line-height:17px;color:#fff;font-weight:normal;letter-spacing:0.6px;transform:scaleX(0.8913) translateX(-50%);">CueList 2</span>
<div class="ex" style="left:930px;top:731px;width:116px;height:215px;border-color:#e60039;"></div>
<div class="exh" style="left:931px;top:732px;width:114px;height:50px;border-color:#e60039;border-radius:5px 5px 0 0;"></div>
<div class="h2" style="left:931px;top:925.6px;width:114px;height:18px;"></div>
<span class="t" style="left:947.2px;transform-origin:0 50%;top:735px;font-size:21.5px;line-height:24px;color:#fff;font-weight:normal;transform:scaleX(1.0000) translateX(-50%);">8</span>
<span class="t" style="left:960.52px;transform-origin:0 50%;top:744px;font-size:11px;line-height:12px;color:#e60039;font-weight:normal;transform:scaleX(1.0714);">-: ---</span>
<span class="t" style="left:943.54px;transform-origin:0 50%;top:759px;font-size:11.5px;line-height:12px;color:#fff;font-weight:normal;transform:scaleX(1.0000);">3</span>
<span class="t" style="left:961.93px;transform-origin:0 50%;top:759px;font-size:11.5px;line-height:12px;color:#fff;font-weight:normal;transform:scaleX(1.0038);">2: Cue 6</span>
<svg style="left:958.8px;top:795.6px" width="58" height="58" viewBox="0 0 58 58"><path d="M17.4 51.2A24.7 24.7 0 1 1 40.6 51.2" fill="none" stroke="#b0b0b0" stroke-width="1.6"/></svg>
<span class="t" style="left:987.8px;transform-origin:0 50%;top:815px;font-size:14px;line-height:16px;color:#ddd;font-weight:normal;transform:scaleX(1.0625) translateX(-50%);">0</span>
<svg style="left:958.8px;top:859.7px" width="58" height="58" viewBox="0 0 58 58"><circle cx="29" cy="29" r="24.7" fill="none" stroke="#ececec" stroke-width="2.3"/><path d="M23.2 17.4L41.6 29L23.2 40.6z" fill="#fff"/></svg>
<span class="t" style="left:987.8px;transform-origin:0 50%;top:925px;font-size:15px;line-height:17px;color:#fff;font-weight:normal;letter-spacing:0.6px;transform:scaleX(0.8913) translateX(-50%);">CueList 3</span>
<div class="ex" style="left:1049px;top:731px;width:116px;height:215px;border-color:#626262;"></div>
<div class="exh h2" style="left:1050px;top:732px;width:114px;height:50px;border-color:#626262;border-radius:5px 5px 0 0;"></div>
<div class="h2" style="left:1050px;top:925.6px;width:114px;height:18px;"></div>
<span class="t" style="left:1066.2px;transform-origin:0 50%;top:735px;font-size:21.5px;line-height:24px;color:#fff;font-weight:normal;transform:scaleX(1.0000) translateX(-50%);">9</span>
<div class="plus" style="left:1081.6px;top:830.2px;width:50.4px;height:50.4px;"></div>
<svg style="left:1094.8px;top:843.5px" width="24" height="24" viewBox="0 0 24 24"><path d="M4.1 12H19.9M12 4.1V19.9" stroke="#fff" stroke-width="2.4" stroke-linecap="round" fill="none"/></svg>
<div class="ex" style="left:1169px;top:731px;width:116px;height:215px;border-color:#626262;"></div>
<div class="exh h2" style="left:1170px;top:732px;width:114px;height:50px;border-color:#626262;border-radius:5px 5px 0 0;"></div>
<div class="h2" style="left:1170px;top:925.6px;width:114px;height:18px;"></div>
<span class="t" style="left:1186.2px;transform-origin:0 50%;top:735px;font-size:21.5px;line-height:24px;color:#fff;font-weight:normal;transform:scaleX(1.0000) translateX(-50%);">10</span>
<div class="plus" style="left:1201.6px;top:830.2px;width:50.4px;height:50.4px;"></div>
<svg style="left:1214.8px;top:843.5px" width="24" height="24" viewBox="0 0 24 24"><path d="M4.1 12H19.9M12 4.1V19.9" stroke="#fff" stroke-width="2.4" stroke-linecap="round" fill="none"/></svg>
</footer>
</div>
</body></html>
